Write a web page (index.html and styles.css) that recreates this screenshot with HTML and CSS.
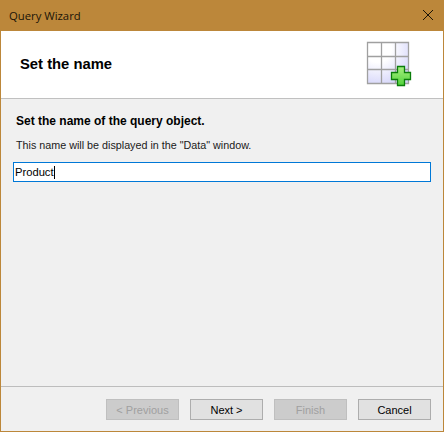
FILE: index.html
```html
<!DOCTYPE html>
<html lang="en">
<head>
  <meta charset="UTF-8">
  <meta name="viewport" content="width=device-width, initial-scale=1.0">
  <title>Query Wizard</title>
  <link rel="stylesheet" href="styles.css">
</head>
<body>
  <div class="window">
    <div class="titlebar">
      <span class="title">Query Wizard</span>
      <svg class="close" width="10" height="10" viewBox="0 0 10 10">
        <path d="M0 0L10 10M10 0L0 10" stroke="#1a1408" stroke-width="1" fill="none"/>
      </svg>
    </div>

    <div class="header">
      <h1>Set the name</h1>
      <svg class="wizard-icon" width="46" height="46" viewBox="0 0 46 46">
        <defs>
          <radialGradient id="cell" cx="0.25" cy="0.15" r="0.95">
            <stop offset="0.35" stop-color="#ffffff"/>
            <stop offset="1" stop-color="#d4d4fa"/>
          </radialGradient>
          <linearGradient id="plus" x1="0" y1="0" x2="0" y2="1">
            <stop offset="0" stop-color="#a8f080"/>
            <stop offset="1" stop-color="#52d23c"/>
          </linearGradient>
        </defs>
        <rect x="1.500" y="1.500" width="41" height="41" fill="url(#cell)"/>
        <path d="M1.500 1.500H42.500V42.500H1.500ZM15.500 1.500V42.500M29.500 1.500V42.500M1.500 15.500H42.500M1.500 28.500H42.500" fill="none" stroke="#a0a0a0" stroke-width="1.300"/>
        <path d="M31.500 25.500H38.500V31.500H44.500V38.500H38.500V44.500H31.500V38.500H25.500V31.500H31.500Z" fill="url(#plus)" stroke="#0a7d0a" stroke-width="1.300"/>
      </svg>
    </div>

    <div class="content">
      <h2>Set the name of the query object.</h2>
      <p>This name will be displayed in the "Data" window.</p>
      <div class="name-input">Product<span class="caret"></span></div>
    </div>

    <div class="footer">
      <button class="btn" disabled>&lt; Previous</button>
      <button class="btn">Next &gt;</button>
      <button class="btn" disabled>Finish</button>
      <button class="btn">Cancel</button>
    </div>
  </div>
</body>
</html>
```

FILE: styles.css
```css
/* Basic reset */
* {
  margin: 0;
  padding: 0;
  box-sizing: border-box;
}

body {
  font-family: 'Liberation Sans', Arial, sans-serif;
  font-size: 11px;
  color: #000;
  background: #f0f0f0;
}

/* Dialog frame */
.window {
  width: 444px;
  height: 432px;
  display: flex;
  flex-direction: column;
  background: #f0f0f0;
  border: 1px solid #bc873a;
}

.titlebar {
  height: 30px;
  flex: none;
  display: flex;
  align-items: center;
  justify-content: space-between;
  padding: 0 10px 2px 8px;
  background: #bc873a;
}

.title {
  font-family: 'Open Sans', sans-serif;
  font-size: 11.300px;
  color: #1a1408;
}

/* White header with the wizard picture */
.header {
  height: 68px;
  flex: none;
  display: flex;
  justify-content: space-between;
  padding: 10px 31px 0 19px;
  background: #fff;
  border-bottom: 1px solid #c0c0c0;
}

.header h1 {
  font-size: 14.800px;
  line-height: 17px;
  margin-top: 15px;
  font-weight: bold;
  color: #000;
}

/* Form area */
.content {
  flex: 1;
  padding: 15px 12px 0 12px;
}

.content h2 {
  font-size: 12px;
  font-weight: bold;
  line-height: 14px;
  margin: 0 0 10px 3px;
}

.content p {
  font-size: 10.750px;
  line-height: 14px;
  margin: 0 0 10px 3px;
  color: #1a1a1a;
}

.name-input {
  height: 20px;
  display: flex;
  align-items: center;
  padding-left: 1px;
  font-size: 11.200px;
  background: #fff;
  border: 1px solid #0078d7;
}

.caret {
  width: 1px;
  height: 13px;
  background: #000;
}

/* Button row */
.footer {
  height: 45px;
  flex: none;
  display: flex;
  justify-content: flex-end;
  gap: 11px;
  padding: 12px 12px 0 0;
  border-top: 1px solid #bdbdbd;
}

.btn {
  width: 73px;
  height: 21px;
  font-family: 'Liberation Sans', Arial, sans-serif;
  font-size: 11px;
  color: #000;
  background: #e1e1e1;
  border: 1px solid #adadad;
}

.btn:disabled {
  color: #a0a0a0;
  background: #cccccc;
  border-color: #bfbfbf;
}
```
